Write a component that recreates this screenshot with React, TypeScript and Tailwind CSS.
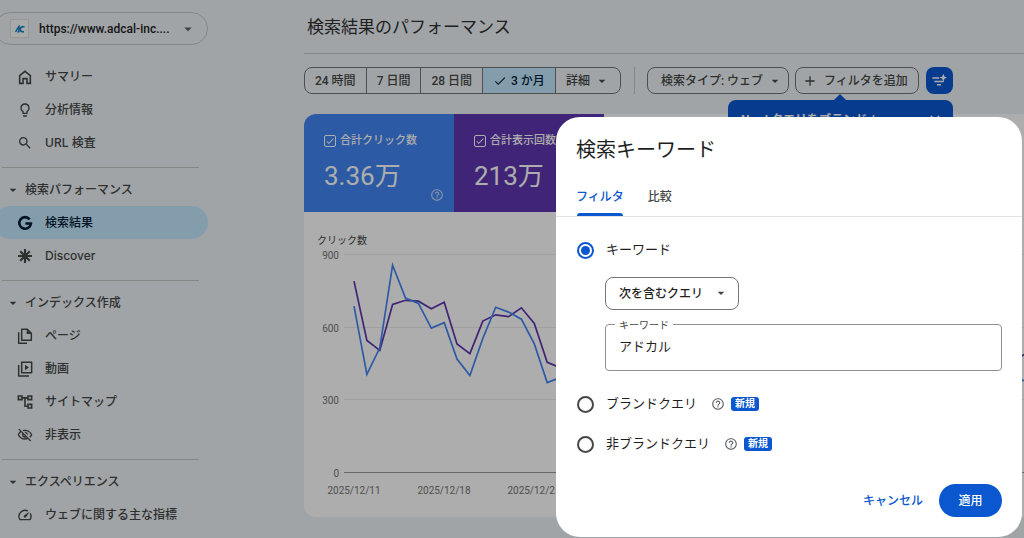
import React, { useState } from 'react'
import {
  MdAdd,
  MdArrowDropDown,
  MdCheck,
  MdClose,
  MdHelpOutline,
  MdLightbulbOutline,
  MdOutlineSpeed,
  MdOutlineVisibilityOff,
  MdSearch
} from 'react-icons/md'

const clicks = [
  685, 403, 513, 854, 718, 696, 594, 617, 466, 398, 551, 680, 660, 631, 529, 369, 390, 560, 640, 655, 610, 540, 380, 400,
  500, 520, 480, 430, 390, 330, 300, 310, 350, 380, 420, 470, 380, 400, 560, 640, 650, 620, 560, 400, 410, 580, 650, 660,
  620, 560, 410, 376, 378, 380
]

const impressions = [
  788, 543, 502, 692, 709, 705, 674, 701, 529, 489, 623, 649, 641, 678, 613, 453, 431, 600, 660, 670, 640, 600, 460, 450,
  560, 570, 540, 500, 460, 420, 400, 410, 440, 470, 510, 540, 470, 480, 620, 680, 690, 670, 620, 480, 490, 640, 690, 700,
  670, 620, 500, 460, 484, 500
]

const toPoints = (values: number[]) =>
  values.map((v, i) => `${(50 + i * 12.88).toFixed(1)},${(260 - v * 0.2422).toFixed(1)}`).join(' ')

const HomeIcon = () => (
  <svg viewBox="0 0 24 24" className="h-4 w-4" fill="none" stroke="currentColor" strokeWidth="2.4">
    <path d="M4 10 12 3.500 20 10v11.500h-5V14.500H9v7H4z" />
  </svg>
)

const GoogleIcon = () => (
  <svg viewBox="0 0 24 24" className="h-4 w-4" fill="none" stroke="currentColor" strokeWidth="4">
    <path d="M19 6.500A8.700 8.700 0 1 0 20.800 12.800H12.500" />
  </svg>
)

const DiscoverIcon = () => (
  <svg viewBox="0 0 24 24" className="h-4 w-4" stroke="currentColor" strokeWidth="3.2">
    <path d="M12 1.500v21M1.500 12h21M4.800 4.800l14.400 14.400M19.200 4.800 4.800 19.200" />
  </svg>
)

const PagesIcon = () => (
  <svg viewBox="0 0 24 24" className="h-4 w-4" fill="none" stroke="currentColor" strokeWidth="2.2" strokeLinejoin="round">
    <path d="M7 2h8.500l6 6v10.500H7z" />
    <path d="M2.500 6.500V23H15" />
    <path d="M14.500 2v7h7z" fill="currentColor" stroke="none" />
  </svg>
)

const VideoIcon = () => (
  <svg viewBox="0 0 24 24" className="h-4 w-4" fill="none" stroke="currentColor" strokeWidth="2.2" strokeLinejoin="round">
    <path d="M7 2h15v15.500H7z" />
    <path d="M2.500 6v16.500H18" />
    <path d="M12 5.500v8.500l6-4.250z" fill="currentColor" stroke="none" />
  </svg>
)

const SitemapIcon = () => (
  <svg viewBox="0 0 24 24" className="h-4 w-4" fill="none" stroke="currentColor" strokeWidth="2.4">
    <path d="M2 3h5.500v5.500H2zM16.500 3H22v5.500h-5.500zM16.500 15.500H22V21h-5.500z" />
    <path d="M7.500 5.800h9M12 5.800v12.500h4.500" />
  </svg>
)

const FilterSparkIcon = () => (
  <svg viewBox="0 0 24 24" className="h-4 w-4" fill="currentColor">
    <path d="M2 6.500h10.500v2.200H2zM5 11.500h14v2.200H5zM9 16.500h6v2.200H9z" />
    <path d="M18.500 1 20.200 5.300 24 7 20.200 8.700 18.500 13 16.800 8.700 13 7 16.800 5.300z" />
  </svg>
)

interface NavItemProps {
  icon: React.ReactNode
  label: string
  active?: boolean
}

const NavItem: React.FC<NavItemProps> = ({ icon, label, active }) => (
  <a
    href="#"
    className={`flex h-[33px] items-center gap-3 rounded-full pl-[23px] font-[Inter,'Noto_Sans_CJK_JP',sans-serif] text-xs font-medium ${
      active ? 'bg-[#c2e7ff] text-[#001d35]' : 'text-[#444746]'
    }`}
  >
    {icon}
    {label}
  </a>
)

const NavHeader: React.FC<{ label: string }> = ({ label }) => (
  <button type="button" className="flex h-[33px] w-full items-center gap-1 pl-[11px] text-xs font-medium text-[#444746]">
    <MdArrowDropDown className="h-4 w-4" />
    {label}
  </button>
)

const NavDivider = () => <hr className="mt-2 mr-[9px] mb-[5px] ml-2 border-[#c4c7c5]" />

interface MetricTileProps {
  id: string
  label: string
  value: string
  color: string
}

const MetricTile: React.FC<MetricTileProps> = ({ id, label, value, color }) => (
  <div className={`relative w-[150px] px-5 pt-[18px] text-white ${color}`}>
    <div className="flex items-center gap-1">
      <span className="relative flex h-3 w-3 shrink-0">
        <input id={id} type="checkbox" defaultChecked className="h-3 w-3 appearance-none rounded-xs border border-white" />
        <MdCheck className="pointer-events-none absolute inset-px h-2.5 w-2.5" />
      </span>
      <label htmlFor={id} className="text-[11px] leading-[18px] font-medium whitespace-nowrap">
        {label}
      </label>
    </div>
    <div className="mt-2 text-[26px] leading-9">{value}</div>
    <MdHelpOutline className="absolute right-2.5 bottom-2.5 h-3.5 w-3.5 opacity-70" />
  </div>
)

const PerformanceChart = () => (
  <svg width="760" height="300" className="block font-[Roboto]" role="img" aria-label="クリック数">
    <text x="13" y="32" fontSize="10" fill="#444746" fontFamily="Roboto, 'Noto Sans CJK JP', sans-serif">
      クリック数
    </text>
    {[900, 600, 300, 0].map((v) => {
      const y = Math.round(260 - v * 0.2422) + 0.5
      return (
        <g key={v}>
          <line x1="40" x2="760" y1={y} y2={y} stroke={v === 0 ? '#9a9a9a' : '#ebebeb'} />
          <text x="35" y={y + 4} fontSize="10" fill="#757575" textAnchor="end">
            {v}
          </text>
        </g>
      )
    })}
    {['2025/12/11', '2025/12/18', '2025/12/25', '2026/01/01'].map((d, i) => (
      <text key={d} x={50 + i * 90} y="282" fontSize="10" fill="#757575" textAnchor="middle">
        {d}
      </text>
    ))}
    <polyline points={toPoints(impressions)} fill="none" stroke="#5e35b1" strokeWidth="1.7" />
    <polyline points={toPoints(clicks)} fill="none" stroke="#4285f4" strokeWidth="1.7" />
  </svg>
)

interface QueryOptionProps {
  id: string
  label: string
  checked: boolean
  isNew?: boolean
  onSelect: (id: string) => void
}

const QueryOption: React.FC<QueryOptionProps> = ({ id, label, checked, isNew, onSelect }) => (
  <div className="flex h-5 items-center">
    <span className="relative flex h-[17px] w-[17px] items-center justify-center">
      <input
        id={id}
        type="radio"
        name="queryType"
        checked={checked}
        onChange={() => onSelect(id)}
        className={`h-[17px] w-[17px] appearance-none rounded-full border-2 ${
          checked ? 'border-[#0b57d0]' : 'border-[#444746]'
        }`}
      />
      {checked && <span className="pointer-events-none absolute h-[9px] w-[9px] rounded-full bg-[#0b57d0]" />}
    </span>
    <label htmlFor={id} className="ml-3 text-[13px]">
      {label}
    </label>
    {isNew && (
      <>
        <MdHelpOutline className="ml-3.5 h-3.5 w-3.5 text-[#5f6368]" />
        <span className="ml-1.5 rounded-[3px] bg-[#0b57d0] px-1 text-[10px] leading-[14px] font-bold text-white">新規</span>
      </>
    )}
  </div>
)

const App: React.FC = () => {
  const [range, setRange] = useState('3 か月')
  const [queryType, setQueryType] = useState('keyword')
  const [keyword, setKeyword] = useState('アドカル')

  return (
    <div className="relative h-screen overflow-hidden bg-[#edf2f7] font-[Roboto,'Noto_Sans_CJK_JP',sans-serif] text-[#1f1f1f]">
      <div className="flex">
        {/* Sidebar */}
        <aside className="-ml-1.5 w-[214px] shrink-0 pt-3">
          <button type="button" className="flex h-[33px] w-full items-center rounded-full border border-[#c4c7c5] pl-[15px] text-xs font-medium">
            <span className="flex h-[19px] w-[19px] items-center justify-center border border-[#e0e0e0] bg-[#f8f9fa]">
              <svg viewBox="0 0 20 14" className="h-2 w-2.5" fill="none" stroke="#0b7cc4" strokeWidth="2.8">
                <path d="M1 12.500 8 1.500v11H5M19 2.500h-4c-5 0-6 10 0 10h3" />
              </svg>
            </span>
            <span className="ml-2.5 w-[134px] text-left whitespace-nowrap">https://www.adcal-inc....</span>
            <MdArrowDropDown className="ml-1.5 h-[18px] w-[18px] text-[#5f6368]" />
          </button>
          <nav className="mt-[15px]">
            <NavItem icon={<HomeIcon />} label="サマリー" />
            <NavItem icon={<MdLightbulbOutline className="h-4 w-4" />} label="分析情報" />
            <NavItem icon={<MdSearch className="h-4 w-4" />} label="URL 検査" />
            <NavDivider />
            <NavHeader label="検索パフォーマンス" />
            <NavItem icon={<GoogleIcon />} label="検索結果" active />
            <NavItem icon={<DiscoverIcon />} label="Discover" />
            <NavDivider />
            <NavHeader label="インデックス作成" />
            <NavItem icon={<PagesIcon />} label="ページ" />
            <NavItem icon={<VideoIcon />} label="動画" />
            <NavItem icon={<SitemapIcon />} label="サイトマップ" />
            <NavItem icon={<MdOutlineVisibilityOff className="h-4 w-4" />} label="非表示" />
            <NavDivider />
            <NavHeader label="エクスペリエンス" />
            <NavItem icon={<MdOutlineSpeed className="h-4 w-4" />} label="ウェブに関する主な指標" />
          </nav>
        </aside>

        {/* Report */}
        <main className="ml-24 min-w-0 flex-1">
          <h1 className="flex h-[53px] items-center pt-0.5 pl-[3px] text-[17px] text-[#303030]">検索結果のパフォーマンス</h1>
          <hr className="border-[#c4c7c5]" />

          <div className="mt-[13px] flex h-[27px] items-stretch text-xs font-medium whitespace-nowrap text-[#444746]">
            <div className="flex divide-x divide-[#747775] overflow-hidden rounded-lg border border-[#747775]">
              {['24 時間', '7 日間', '28 日間', '3 か月'].map((label) => (
                <button
                  key={label}
                  type="button"
                  onClick={() => setRange(label)}
                  className={`flex items-center gap-1 px-2.5 ${range === label ? 'bg-[#c2e7ff] text-[#001d35]' : ''}`}
                >
                  {range === label && <MdCheck className="h-3.5 w-3.5" />}
                  {label}
                </button>
              ))}
              <button type="button" className="flex items-center gap-1 px-2.5">
                詳細
                <MdArrowDropDown className="h-4 w-4" />
              </button>
            </div>
            <div className="ml-[13px] w-px bg-[#c4c7c5]" />
            <button type="button" className="ml-3 flex items-center gap-1 rounded-lg border border-[#747775] pr-[5px] pl-[13px]">
              検索タイプ: ウェブ
              <MdArrowDropDown className="h-4 w-4" />
            </button>
            <div className="relative ml-1.5 flex">
              <button type="button" className="flex items-center gap-1.5 rounded-lg border border-[#747775] pr-2.5 pl-1.5">
                <MdAdd className="h-4 w-4" />
                フィルタを追加
              </button>
              {/* New feature callout */}
              <div className="absolute top-[33px] -left-[67px] h-24 w-[225px] rounded-lg bg-[#0b57d0] text-white">
                <span className="absolute -top-1.5 left-[106px] border-x-[6px] border-b-[6px] border-x-transparent border-b-[#0b57d0]" />
                <div className="flex items-start justify-between pt-3 pr-2.5 pl-[13px]">
                  <span className="font-bold">New! クエリをブランド /</span>
                  <button type="button" aria-label="閉じる">
                    <MdClose className="h-4 w-4" />
                  </button>
                </div>
              </div>
            </div>
            <button
              type="button"
              aria-label="AI フィルタ"
              className="ml-[7px] flex w-[27px] items-center justify-center rounded-lg bg-[#0b57d0] text-white"
            >
              <FilterSparkIcon />
            </button>
          </div>

          <section className="mt-5 h-[403px] overflow-hidden rounded-l-xl bg-white">
            <div className="flex h-[98px]">
              <MetricTile id="clicks" label="合計クリック数" value="3.36万" color="bg-[#4285f4]" />
              <MetricTile id="impressions" label="合計表示回数" value="213万" color="bg-[#5e35b1]" />
            </div>
            <PerformanceChart />
          </section>
        </main>
      </div>

      {/* Filter dialog */}
      <div className="absolute inset-0 flex items-end justify-end bg-black/32 pr-0.5 pb-px">
        <div role="dialog" aria-labelledby="dialog-title" className="w-[466px] rounded-3xl bg-white">
          <h2 id="dialog-title" className="px-5 pt-[19px] text-xl leading-7">
            検索キーワード
          </h2>
          <div role="tablist" className="mt-[13px] flex h-10 gap-6 border-b border-[#e1e3e1] px-5 text-xs font-medium">
            <button type="button" role="tab" aria-selected="true" className="relative text-[#0b57d0]">
              フィルタ
              <span className="absolute inset-x-px bottom-0 h-[3px] rounded-t-full bg-[#0b57d0]" />
            </button>
            <button type="button" role="tab" aria-selected="false" className="text-[#444746]">
              比較
            </button>
          </div>

          <div className="px-5 pt-[23px] pl-[21px]">
            <QueryOption id="keyword" label="キーワード" checked={queryType === 'keyword'} onSelect={setQueryType} />
            <div className="ml-7">
              <div className="relative mt-[17px] w-[134px]">
                <select
                  aria-label="一致条件"
                  className="h-[33px] w-full appearance-none rounded-lg border border-[#747775] pl-[13px] text-xs font-medium"
                >
                  <option>次を含むクエリ</option>
                  <option>次を含まないクエリ</option>
                  <option>クエリの完全一致</option>
                </select>
                <MdArrowDropDown className="pointer-events-none absolute top-2 right-2.5 h-4 w-4 text-[#444746]" />
              </div>
              <div className="relative mt-3.5">
                <label htmlFor="keyword-text" className="absolute -top-1.5 left-2.5 bg-white px-1 text-[10px] leading-4 text-[#444746]">
                  キーワード
                </label>
                <input
                  id="keyword-text"
                  type="text"
                  value={keyword}
                  onChange={(e) => setKeyword(e.target.value)}
                  className="h-[47px] w-full rounded-sm border border-[#8e918f] px-[13px] pb-1 text-[13px]"
                />
              </div>
            </div>
            <div className="mt-[23px] space-y-5">
              <QueryOption id="brand" label="ブランドクエリ" checked={queryType === 'brand'} isNew onSelect={setQueryType} />
              <QueryOption id="non-brand" label="非ブランドクエリ" checked={queryType === 'non-brand'} isNew onSelect={setQueryType} />
            </div>
          </div>

          <div className="mt-[30px] flex items-center justify-end gap-4 pr-5 pb-5 text-xs font-medium">
            <button type="button" className="text-[#0b57d0]">
              キャンセル
            </button>
            <button type="button" className="h-[33px] w-[63px] rounded-full bg-[#0b57d0] text-white">
              適用
            </button>
          </div>
        </div>
      </div>
    </div>
  )
}

export default App
